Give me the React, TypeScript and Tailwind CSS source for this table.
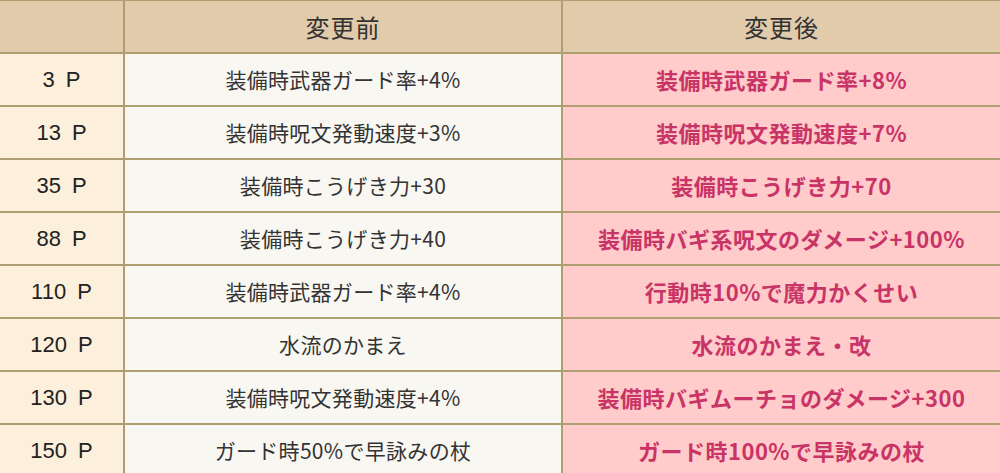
const rows = [
  { p: "3", before: "装備時武器ガード率+4%", after: "装備時武器ガード率+8%" },
  { p: "13", before: "装備時呪文発動速度+3%", after: "装備時呪文発動速度+7%" },
  { p: "35", before: "装備時こうげき力+30", after: "装備時こうげき力+70" },
  { p: "88", before: "装備時こうげき力+40", after: "装備時バギ系呪文のダメージ+100%" },
  { p: "110", before: "装備時武器ガード率+4%", after: "行動時10%で魔力かくせい" },
  { p: "120", before: "水流のかまえ", after: "水流のかまえ・改" },
  { p: "130", before: "装備時呪文発動速度+4%", after: "装備時バギムーチョのダメージ+300" },
  { p: "150", before: "ガード時50%で早詠みの杖", after: "ガード時100%で早詠みの杖" },
];

const jp = "font-['Noto_Sans_CJK_JP','Noto_Sans',sans-serif]";

export default function App() {
  return (
    <div className="w-[1000px] h-[473px] overflow-hidden bg-[#f9f7f2]">
      <div className="grid grid-cols-[123px_436px_1fr] auto-rows-[51px] gap-[2px] bg-[#ae9f70] pt-px">
        <div className="bg-[#e1cbab]" />
        <div className={`bg-[#e1cbab] flex items-center justify-center text-[24px] tracking-[1px] text-[#333] ${jp}`}>
          変更前
        </div>
        <div className={`bg-[#e1cbab] flex items-center justify-center text-[24px] tracking-[1px] text-[#333] ${jp}`}>
          変更後
        </div>
        {rows.map((r) => (
          <div key={r.p} className="contents">
            <div className="bg-[#fcefdb] flex items-center justify-center text-[22px] text-[#222] font-['Liberation_Sans',sans-serif]">
              {r.p}
              {"\u2002"}P
            </div>
            <div className={`bg-[#f9f7f2] flex items-center justify-center text-[21px] text-[#333] tracking-[0.3px] ${jp}`}>
              {r.before}
            </div>
            <div className={`bg-[#ffcbcb] flex items-center justify-center text-[22px] font-bold text-[#c93466] tracking-[0.5px] ${jp}`}>
              {r.after}
            </div>
          </div>
        ))}
      </div>
    </div>
  );
}
